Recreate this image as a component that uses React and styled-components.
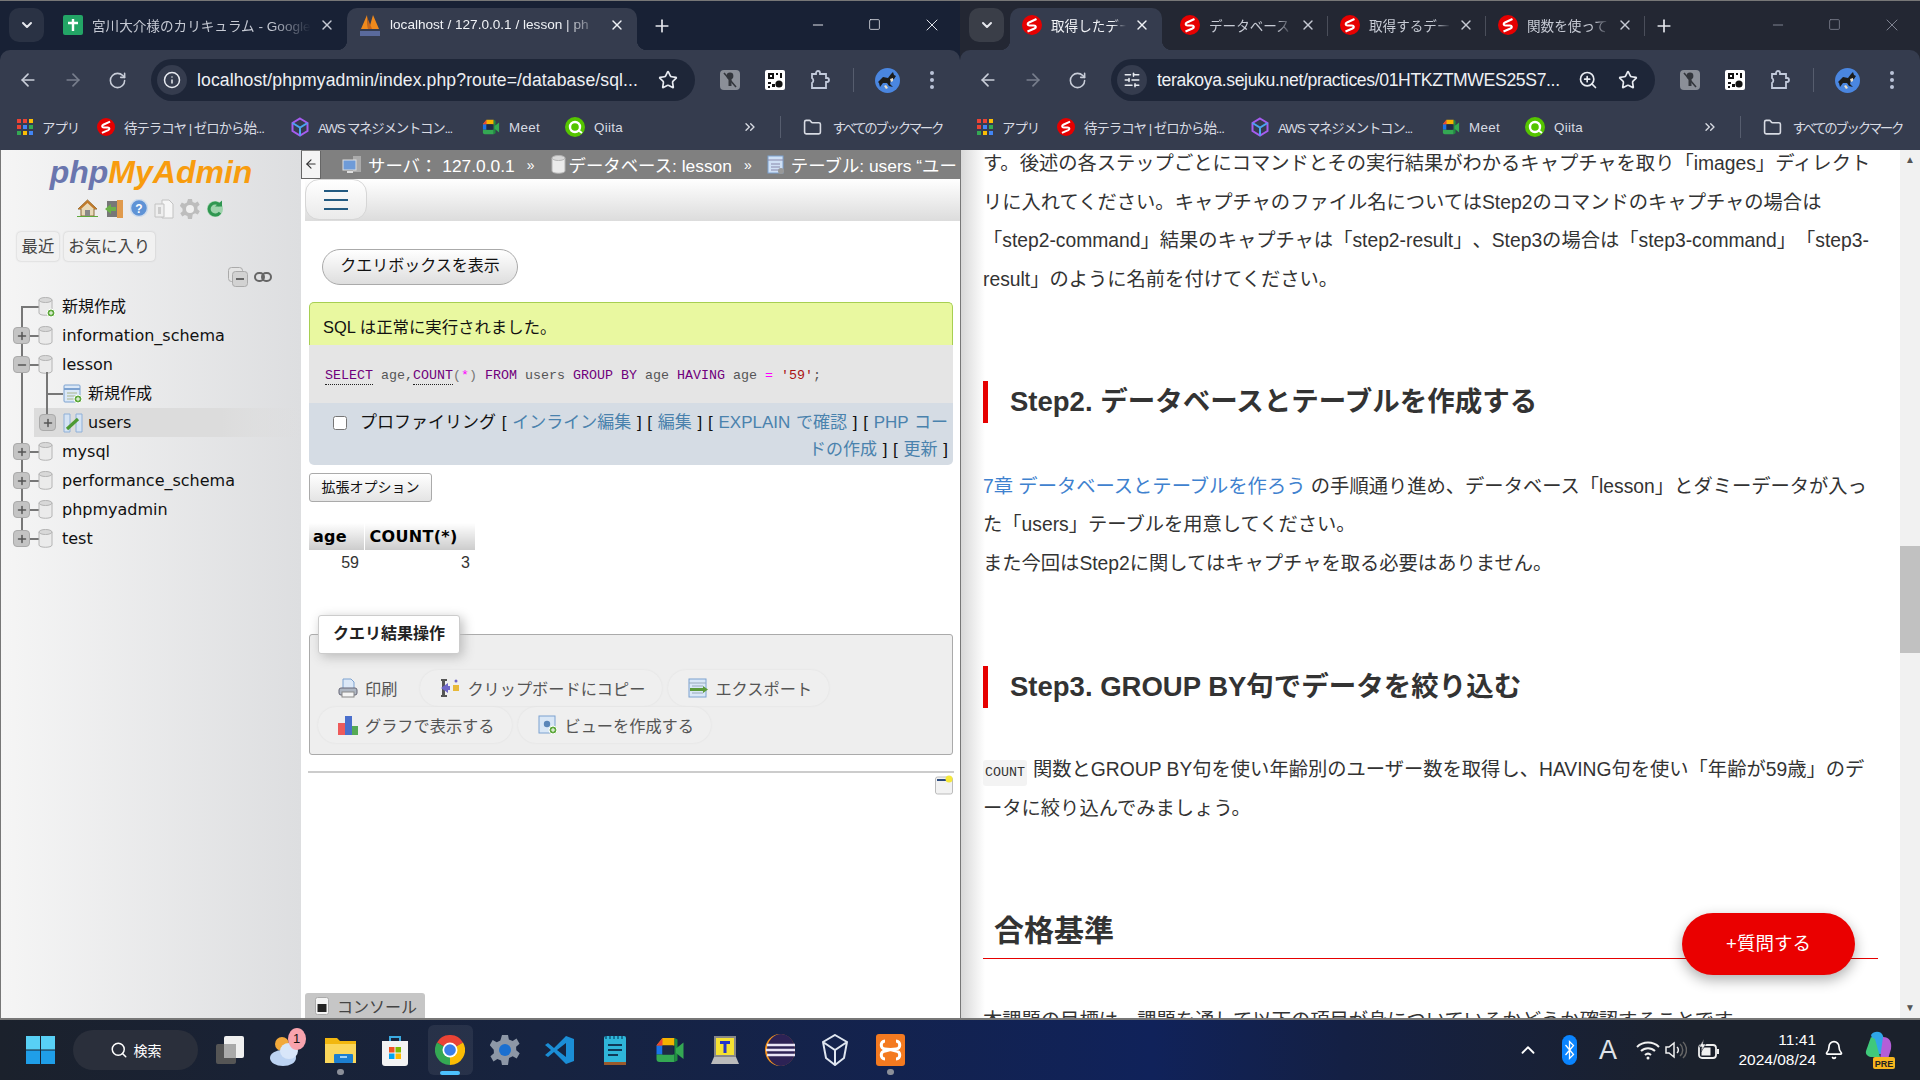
import React from 'react'
import styled, { createGlobalStyle } from 'styled-components'
import {
  ArrowLeft, ArrowRight, RotateCw, Info, Star, ZoomIn, Plus, X, ChevronDown, Minus, Square,
  ChevronsRight, Folder, SlidersHorizontal, Search, Bell, ChevronUp,
} from 'lucide-react'

const jp = `"Liberation Sans", "Noto Sans CJK JP", sans-serif`

const Global = createGlobalStyle`
  html, body { margin: 0; padding: 0; background: #1a212e; }
  body { width: 1920px; height: 1080px; overflow: hidden; font-family: ${jp}; }
  * { box-sizing: border-box; }
`

const Screen = styled.div`
  width: 1920px;
  height: 1080px;
  display: flex;
  flex-direction: column;
`
const Desktop = styled.div`
  display: flex;
  height: 1020px;
`
const Win = styled.section`
  width: 960px;
  height: 1020px;
  display: flex;
  flex-direction: column;
  background: ${p => p.$strip};
  border-top: 1px solid #777;
`

/* ---- tab strip ---- */
const Strip = styled.div`
  height: 49px;
  display: flex;
  align-items: flex-end;
  color: #e6e8ee;
  padding-left: 9px;
`
const TabMenu = styled.div`
  width: 35px;
  height: 34px;
  margin-bottom: 8px;
  border-radius: 10px;
  background: ${p => p.$bg};
  display: flex;
  align-items: center;
  justify-content: center;
  flex: none;
`
const Tab = styled.div`
  position: relative;
  width: ${p => p.$w}px;
  margin-left: ${p => p.$ml || 0}px;
  height: 42px;
  flex: none;
  display: flex;
  align-items: center;
  padding: 0 12px 9px 12px;
  border-radius: 10px 10px 0 0;
  background: ${p => (p.$active ? '#353c4e' : 'transparent')};
  color: ${p => (p.$active ? '#f0f2f6' : '#c6cad4')};
  font-size: 13.6px;
  &::after {
    content: '';
    display: ${p => (p.$sep ? 'block' : 'none')};
    position: absolute;
    right: 0;
    top: 8px;
    width: 1px;
    height: 20px;
    background: #4a4e5a;
  }
  &::before {
    content: '';
    display: ${p => (p.$active ? 'block' : 'none')};
    position: absolute;
    bottom: 0;
    left: -10px;
    right: -10px;
    height: 10px;
    z-index: 0;
    background:
      radial-gradient(circle at 0 0, transparent 10px, #353c4e 10.5px) left bottom / 10px 10px no-repeat,
      radial-gradient(circle at 100% 0, transparent 10px, #353c4e 10.5px) right bottom / 10px 10px no-repeat;
  }
`
const TabTitle = styled.span`
  flex: 1;
  margin-left: 9px;
  white-space: nowrap;
  overflow: hidden;
  -webkit-mask-image: linear-gradient(90deg, #000 82%, transparent);
  mask-image: linear-gradient(90deg, #000 82%, transparent);
`
const TabClose = styled(X)`
  flex: none;
  margin-left: 8px;
`
const NewTab = styled(Plus)`
  flex: none;
  margin: 0 0 14px ${p => p.$ml}px;
  color: #e6e8ee;
`
const WinControls = styled.div`
  margin-left: auto;
  display: flex;
  align-self: stretch;
  color: ${p => (p.$dim ? '#7f8391' : '#dfe2e8')};
`
const WinBtn = styled.div`
  width: 57px;
  display: flex;
  align-items: center;
  justify-content: center;
  padding-bottom: 2px;
`

/* ---- address bar ---- */
const Toolbar = styled.div`
  height: 60px;
  flex: none;
  background: #353c4e;
  border-radius: 10px 10px 0 0;
  display: flex;
  align-items: center;
  padding-left: 18px;
  color: #c9ced9;
`
const NavBtn = styled.div`
  width: 45px;
  flex: none;
  display: flex;
  justify-content: flex-start;
  opacity: ${p => (p.$off ? 0.45 : 1)};
`
const AddressBar = styled.div`
  width: 544px;
  height: 42px;
  margin-left: -2px;
  flex: none;
  border-radius: 21px;
  background: #1e2638;
  display: flex;
  align-items: center;
  padding: 0 17px 0 6px;
  color: #e8ebf1;
`
const SiteChip = styled.div`
  width: 30px;
  height: 30px;
  flex: none;
  border-radius: 50%;
  background: #353c4e;
  display: flex;
  align-items: center;
  justify-content: center;
  margin-right: 10px;
`
const Url = styled.div`
  flex: 1;
  font-size: 17.6px;
  letter-spacing: ${p => p.$ls}px;
  white-space: nowrap;
  overflow: hidden;
  color: #eef0f4;
`
const UrlIcons = styled.div`
  display: flex;
  align-items: center;
  gap: 20px;
`
const ExtGroup = styled.div`
  display: flex;
  align-items: center;
  margin-left: 25px;
  gap: 25px;
`
const ToolSep = styled.div`
  width: 1px;
  height: 24px;
  background: #565d6e;
  margin: 0 21px 0 23px;
`
const Kebab = styled.div`
  margin-left: 30px;
  display: flex;
  flex-direction: column;
  gap: 3px;
  i { width: 4px; height: 4px; border-radius: 50%; background: #b9c2d6; }
`

/* ---- bookmarks ---- */
const Bookmarks = styled.div`
  height: 40px;
  flex: none;
  background: #353c4e;
  display: flex;
  align-items: center;
  padding: 0 18px 6px 17px;
  color: #d8dbe3;
  font-size: 13.4px;
`
const Mark = styled.div`
  width: ${p => p.$w}px;
  flex: none;
  display: flex;
  align-items: center;
  gap: 9px;
  letter-spacing: ${p => p.$ls}px;
  white-space: nowrap;
  overflow: hidden;
`
const MarkTail = styled.div`
  margin-left: auto;
  display: flex;
  align-items: center;
  gap: 22px;
`
const TailSep = styled.div`
  width: 1px;
  height: 22px;
  background: #565d6e;
`
const AllMarks = styled.div`
  display: flex;
  align-items: center;
  gap: 11px;
  letter-spacing: -2.3px;
`

/* ---- page area ---- */
const Viewport = styled.div`
  flex: 1;
  min-height: 0;
  display: flex;
  overflow: hidden;
  background: #fff;
  border-left: 1px solid #777;
  border-bottom: 2px solid #777;
`
const Sidebar = styled.aside`
  width: 300px;
  flex: none;
  background: linear-gradient(90deg, #f5f5f5, #dddee0);
  padding-top: 3px;
`
const Logo = styled.div`
  text-align: center;
  font: italic bold 32px/38px "Liberation Sans", sans-serif;
  color: #f89c0e;
  span { color: #6a76ae; }
`
const NavIcons = styled.div`
  display: flex;
  justify-content: center;
  gap: 6px;
  margin: 8px 0 0 -1px;
  height: 22px;
`
const SideTabs = styled.div`
  display: flex;
  gap: 5px;
  margin: 11px 0 0 16px;
`
const SideTab = styled.div`
  height: 29px;
  padding: 0 4.5px;
  border-radius: 4px;
  background: #f1f1f1;
  box-shadow: 0 0 2px #bbb;
  font-size: 16.4px;
  line-height: 28px;
  color: #444;
`
const TreeTools = styled.div`
  height: 19px;
  margin: 6px 0 0 0;
  padding-left: 227px;
  display: flex;
  align-items: center;
  gap: 6px;
`
const Tree = styled.ul`
  list-style: none;
  margin: 6px 0 0 0;
  padding: 0;
`
const TreeRow = styled.li`
  position: relative;
  height: 29px;
  display: flex;
  align-items: center;
  padding-left: ${p => p.$left}px;
  font: 16px/29px "DejaVu Sans", "Noto Sans CJK JP", sans-serif;
  color: #111;
  background: ${p => (p.$hot ? 'linear-gradient(90deg, #dcdcdc 70%, transparent)' : 'none')};
  margin-left: ${p => (p.$hot ? 33 : 0)}px;
`
const TreeLine = styled.i`
  position: absolute;
  left: ${p => p.$x}px;
  top: ${p => p.$top}px;
  bottom: ${p => p.$bottom}px;
  width: 1.5px;
  background: #777;
`
const TreeStub = styled.i`
  position: absolute;
  left: ${p => p.$x}px;
  top: 14px;
  width: ${p => p.$w}px;
  height: 1.5px;
  background: #777;
`
const TreeIcon = styled.span`
  position: relative;
  flex: none;
  display: flex;
  margin-right: ${p => p.$gap}px;
`
const Expander = styled.span`
  position: relative;
  width: 17px;
  height: 17px;
  flex: none;
  margin-right: 7px;
  border-radius: 4px;
  background: #c4c4c4;
  border: 1px solid #aaa;
  color: #555;
  display: flex;
  align-items: center;
  justify-content: center;
`

const Main = styled.main`
  flex: 1;
  min-width: 0;
  display: flex;
  flex-direction: column;
  background: #fff;
`
const Crumbs = styled.div`
  height: 29px;
  flex: none;
  background: #808080;
  display: flex;
  align-items: center;
  color: #fff;
  font-size: 17.4px;
  white-space: nowrap;
  overflow: hidden;
`
const BackBox = styled.div`
  width: 20px;
  height: 28px;
  flex: none;
  background: #f4f4f4;
  border: 1px solid #666;
  border-top: none;
  color: #333;
  display: flex;
  align-items: center;
  justify-content: center;
  margin-right: 21px;
`
const Crumb = styled.span`
  display: inline-flex;
  align-items: center;
  gap: ${p => p.$gap}px;
  margin-right: 12px;
`
const CrumbArrow = styled.span`
  margin-right: 15px;
  font-size: 14px;
`
const MenuBar = styled.div`
  height: 42px;
  flex: none;
  margin-left: 4px;
  background: linear-gradient(#fff, #dcdcdc);
`
const Burger = styled.div`
  width: 62px;
  height: 41px;
  border: 1px solid #d6d6d6;
  border-radius: 14px;
  background: linear-gradient(#fff, #eaeaea);
  display: flex;
  flex-direction: column;
  justify-content: center;
  gap: 7px;
  padding: 0 18px;
  span { height: 2px; background: #235a81; }
`
const Body = styled.div`
  padding: 0 7px 0 8px;
`
const QueryBtn = styled.div`
  width: 196px;
  height: 36px;
  margin: 28px 0 0 13px;
  border-radius: 18px;
  border: 1px solid #aaa;
  background: linear-gradient(#fff, #dedede);
  font-size: 16px;
  line-height: 31px;
  text-align: center;
  color: #111;
`
const Success = styled.div`
  margin-top: 17px;
  height: 43px;
  background: #e9f8a0;
  border: 1px solid #a7cf52;
  border-bottom: none;
  border-radius: 5px 5px 0 0;
  padding-left: 13px;
  font-size: 16.4px;
  line-height: 49px;
  color: #111;
`
const SqlBox = styled.div`
  height: 58px;
  background: #e5e5e5;
  padding-left: 16px;
  font: 13.33px/62px "Liberation Mono", monospace;
  color: #555;
  white-space: pre;
`
const Kw = styled.span`
  color: ${p => p.$c || '#70007c'};
  border-bottom: ${p => (p.$dotted ? '1px dotted #222' : 'none')};
  padding-bottom: ${p => (p.$dotted ? 1 : 0)}px;
`
const ActionBar = styled.div`
  position: relative;
  height: 62px;
  background: #d5dce4;
  border-radius: 0 0 5px 5px;
  padding: 6px 5px 0 0;
  text-align: right;
  font-size: 17px;
  word-spacing: 1px;
  line-height: 27px;
  white-space: nowrap;
  color: #111;
  a { color: #4a82ad; text-decoration: none; }
`
const Check = styled.input`
  width: 14px;
  height: 14px;
  margin: 0 13px 0 0;
  vertical-align: -2px;
`
const OptionBtn = styled.div`
  width: 123px;
  height: 29px;
  margin-top: 8px;
  border: 1px solid #aaa;
  border-radius: 3px;
  background: linear-gradient(#fff, #e4e4e4);
  font-size: 14px;
  line-height: 26px;
  text-align: center;
  color: #111;
`
const ResultTable = styled.table`
  margin-top: 21px;
  border-collapse: collapse;
  table-layout: fixed;
  width: 166px;
  font: 16px "DejaVu Sans", sans-serif;
  color: #333;
  th {
    height: 27px;
    padding: 0 4px;
    background: linear-gradient(#fff, #ccc);
    color: #000;
    text-align: left;
    border-right: 1px solid #fff;
    font-weight: bold;
    letter-spacing: 0.3px;
    white-space: nowrap;
  }
  th:first-child { width: 55px; }
  th:last-child { padding-left: 5px; border-right: none; }
  td {
    height: 25px;
    padding: 0 5px;
    text-align: right;
    font-family: ${jp};
  }
`
const Fieldset = styled.div`
  position: relative;
  margin-top: 59px;
  height: 121px;
  background: #eee;
  border: 1px solid #aaa;
  border-radius: 3px;
  padding: 35px 8px 0;
  display: flex;
  flex-wrap: wrap;
  align-content: flex-start;
  gap: 1px 6px;
`
const Legend = styled.div`
  position: absolute;
  left: 8px;
  top: -20px;
  width: 142px;
  height: 39px;
  background: #fff;
  border: 1px solid #ccc;
  border-radius: 3px;
  box-shadow: 3px 3px 12px #bbb;
  font-weight: bold;
  font-size: 16px;
  line-height: 36px;
  text-align: center;
  color: #222;
`
const OpBtn = styled.div`
  height: 36px;
  padding: 0 17px 0 20px;
  border-radius: 18px;
  background: ${p => (p.$bare ? 'transparent' : '#efefef')};
  box-shadow: ${p => (p.$bare ? 'none' : '0 0 2px #ddd')};
  display: flex;
  align-items: center;
  gap: 7px;
  font-size: 16.2px;
  color: #555;
`
const Rule = styled.div`
  height: 2px;
  margin: 16px -1px 0 -1px;
  background: #ccc;
`
const NoteIcon = styled.div`
  display: flex;
  justify-content: flex-end;
  margin-top: 2px;
`
const ConsoleTab = styled.div`
  margin-top: auto;
  margin-left: 4px;
  width: 120px;
  height: 25px;
  flex: none;
  background: #c6c6c6;
  border-radius: 3px 3px 0 0;
  display: flex;
  align-items: center;
  gap: 8px;
  padding-left: 10px;
  font-size: 16px;
  color: #444;
`

/* ---- right page ---- */
const Article = styled.article`
  flex: 1;
  min-width: 0;
  overflow: hidden;
  background: linear-gradient(90deg, #d8d8d8, #fff 24px);
  padding: 0 0 0 22px;
  margin-top: -5px;
  color: #333;
  font-size: 19.3px;
  line-height: 38.5px;
  text-spacing-trim: space-all;
`
const Para = styled.p`
  margin: ${p => p.$mt || 0}px 0 0 0;
  white-space: nowrap;
  a { color: #3f82cf; text-decoration: none; }
`
const StepHead = styled.h3`
  margin: ${p => p.$mt}px 0 0 0;
  height: 42px;
  border-left: 5px solid #e60000;
  padding-left: 22px;
  font-size: 27.5px;
  line-height: 42px;
  font-weight: bold;
`
const Code = styled.code`
  display: inline-block;
  background: #f3f3f3;
  border-radius: 3px;
  padding: 0 2px;
  font: 13.33px/26px "Liberation Mono", monospace;
  margin-right: 6px;
`
const PassHead = styled.h2`
  margin: 72.5px 22px 0 0;
  height: 58px;
  border-bottom: 1.5px solid #e60000;
  padding-left: 11px;
  font-size: 30px;
  line-height: 60px;
  font-weight: bold;
`
const AskBtn = styled.div`
  position: absolute;
  right: 65px;
  bottom: 43px;
  width: 173px;
  height: 62px;
  border-radius: 31px;
  background: #ea0000;
  box-shadow: 0 5px 14px rgba(0, 0, 0, 0.32);
  color: #fff;
  font-size: 18.5px;
  text-align: center;
  line-height: 62px;
`
const Scrollbar = styled.div`
  width: 20px;
  flex: none;
  background: #f1f1f1;
  display: flex;
  flex-direction: column;
  align-items: center;
  font-size: 10px;
  line-height: 20px;
  color: #555;
`
const Thumb = styled.div`
  width: 100%;
  height: 107px;
  margin-top: 376px;
  background: #c1c1c1;
`
const ScrollEnd = styled.div`
  margin-top: auto;
`
const RightView = styled(Viewport)`
  position: relative;
`

/* ---- taskbar ---- */
const Taskbar = styled.footer`
  height: 60px;
  flex: none;
  display: flex;
  align-items: center;
  background: linear-gradient(90deg, #1b212c 0%, #17233f 28%, #10225a 60%, #142044 70%, #1b212c 88%);
  color: #fff;
  padding-left: 13px;
`
const TaskIcon = styled.div`
  position: relative;
  width: 55px;
  height: 60px;
  flex: none;
  display: flex;
  align-items: center;
  justify-content: center;
  &::before {
    content: '';
    display: ${p => (p.$active ? 'block' : 'none')};
    position: absolute;
    inset: 5px 5px 5px 5px;
    border-radius: 6px;
    background: rgba(255, 255, 255, 0.07);
  }
  &::after {
    content: '';
    display: ${p => (p.$dot ? 'block' : 'none')};
    position: absolute;
    bottom: 5px;
    width: ${p => (p.$active ? 20 : 7)}px;
    height: ${p => (p.$active ? 4 : 6)}px;
    border-radius: 3px;
    background: ${p => (p.$active ? '#4cc2ff' : '#8b8f99')};
  }
  svg { position: relative; }
`
const Badge = styled.span`
  position: absolute;
  right: 7px;
  top: 8px;
  width: 18px;
  height: 22px;
  border-radius: 50%;
  background: #f8a3ad;
  color: #111;
  font-size: 13px;
  line-height: 22px;
  text-align: center;
`
const SearchPill = styled.div`
  width: 125px;
  height: 40px;
  flex: none;
  margin: 0 4.5px 0 5px;
  border-radius: 20px;
  background: #2a2f3b;
  display: flex;
  align-items: center;
  justify-content: center;
  gap: 6px;
  font-size: 14px;
`
const Tray = styled.div`
  margin-left: auto;
  padding-right: 12px;
  display: flex;
  align-items: center;
  height: 100%;
`
const TrayItem = styled.div`
  width: ${p => p.$w}px;
  flex: none;
  display: flex;
  justify-content: center;
  align-items: center;
`
const TrayA = styled.span`
  font-size: 27px;
  color: #dfe2e8;
  font-family: "Liberation Sans", sans-serif;
`
const Clock = styled.div`
  width: 80px;
  margin-left: 12px;
  flex: none;
  text-align: right;
  font-size: 15.5px;
  line-height: 20px;
  white-space: nowrap;
`

/* ---- icons ---- */
const Samurai = ({ s = 20 }) => (
  <svg width={s} height={s} viewBox="0 0 20 20">
    <circle cx="10" cy="10" r="10" fill="#e60000" />
    <path d="M14.500 4 7 7.500c-2 1-1.500 3 .5 3h4.500c2 0 2.500 2 .5 3L5.500 16.500" fill="none" stroke="#fff" strokeWidth="2.200" />
  </svg>
)
const SheetIcon = () => (
  <svg width="20" height="20" viewBox="0 0 20 20">
    <rect width="20" height="20" rx="2" fill="#23a566" />
    <path d="M10 4v12M5 8h10" stroke="#fff" strokeWidth="2.4" />
  </svg>
)
const PmaIcon = () => (
  <svg width="22" height="24" viewBox="0 0 22 24">
    <path d="M2 16 8 2l1 14zM10 16l4-14 6 14z" fill="#f08a1c" />
    <path d="M8 4 13 16H9z" fill="#c9661a" />
    <path d="M1 18h20v5H1z" fill="#5a6a9c" />
  </svg>
)
const AppsIcon = () => (
  <svg width="16" height="16" viewBox="0 0 16 16">
    {[['#ea4335', '#ea4335', '#fbbc04'], ['#ea4335', '#4285f4', '#34a853'], ['#34a853', '#fbbc04', '#4285f4']].map((r, y) =>
      r.map((c, x) => <rect key={x} x={x * 6} y={y * 6} width="4" height="4" fill={c} />)
    )}
  </svg>
)
const AwsCube = () => (
  <svg width="18" height="20" viewBox="0 0 18 20" fill="none" strokeWidth="2">
    <path d="M9 1.5 16.5 6v8L9 18.5 1.5 14V6z" stroke="#a65cf0" />
    <path d="M1.5 6 9 10.5 16.5 6M9 10.5v8" stroke="#4aa3f0" />
  </svg>
)
const MeetIcon = ({ s = 20 }) => (
  <svg width={s} height={s} viewBox="0 0 20 20">
    <path d="M5 2h8v5H1z" fill="#f4b400" />
    <path d="M1 7h4v6H1z" fill="#1a73e8" />
    <path d="M1 13h12v5H3a2 2 0 0 1-2-2z" fill="#34a853" />
    <path d="M5 2 1 7h4z" fill="#ea4335" />
    <path d="M13 2v16l2-1V3z" fill="#1e8e3e" />
    <path d="m14 9 5-4v11l-5-4z" fill="#34a853" />
    <rect x="5" y="7" width="7" height="6" fill="#1f2a44" />
  </svg>
)
const QiitaIcon = () => (
  <svg width="20" height="20" viewBox="0 0 20 20">
    <circle cx="10" cy="10" r="10" fill="#55c500" />
    <circle cx="10" cy="10" r="5" fill="none" stroke="#fff" strokeWidth="2.4" />
    <path d="M13 13l4 3" stroke="#fff" strokeWidth="2" />
  </svg>
)
const KeyExt = () => (
  <svg width="20" height="20" viewBox="0 0 20 20">
    <rect width="20" height="20" rx="4" fill="#8b8f98" />
    <circle cx="10" cy="6" r="3.400" fill="#33363d" />
    <path d="M10 8v8" stroke="#33363d" strokeWidth="3" />
    <path d="m4 3 12 14" stroke="#33363d" strokeWidth="1.600" />
  </svg>
)
const QrExt = () => (
  <svg width="20" height="20" viewBox="0 0 20 20">
    <rect width="20" height="20" rx="2" fill="#fff" />
    <path d="M3 3h6v6H3z" fill="#111" />
    <path d="M5 5h2v2H5z" fill="#fff" />
    <path d="M11 3h2v2h-2zM15 3h2v5h-2zM3 12h3v2H3zM7 14h3v3H7zM3 16h2v2H3z" fill="#111" />
    <circle cx="14" cy="14" r="3.600" fill="#111" />
  </svg>
)
const PuzzleExt = () => (
  <svg width="20" height="20" viewBox="0 0 20 20" fill="none" stroke="#c2cadb" strokeWidth="1.800">
    <path d="M2 4h4V3a2 2 0 0 1 4 0v1h6v4h1a2 2 0 0 1 0 4h-1v6H2v-5a3 3 0 0 0 0-5z" />
  </svg>
)
const Avatar = () => (
  <svg width="25" height="25" viewBox="0 0 25 25">
    <circle cx="12.500" cy="12.500" r="12.500" fill="#4a86e0" />
    <path d="M3 14 8 9l5 1 3-4 2-2 1 3 2 1-2 3-3 1-1 4 3 3-4-1-2-3-4 0-3 4-1-4z" fill="#1c1c1c" />
    <path d="m15 11 3-1 0 3-2 1zM9 18l2 3 2-1-2-3z" fill="#e8ddc8" />
  </svg>
)
const DbIcon = ({ add }) => (
  <svg width="19" height="22" viewBox="0 0 19 22">
    <path d="M2 4v13c0 3 13 3 13 0V4z" fill="#ebebeb" stroke="#b4b4b4" />
    <ellipse cx="8.5" cy="4" rx="6.5" ry="2.5" fill="#d8d8d8" stroke="#b4b4b4" />
    {add && <circle cx="14" cy="17" r="4" fill="#5ea83c" stroke="#fff" />}
    {add && <path d="M12 17h4M14 15v4" stroke="#fff" />}
  </svg>
)
const TableAdd = () => (
  <svg width="20" height="20" viewBox="0 0 20 20">
    <rect x="1" y="1" width="16" height="17" rx="1" fill="#dbe8f7" stroke="#7da2d0" />
    <path d="M1 5h16" stroke="#7da2d0" strokeWidth="2" />
    <path d="M4 9h10M4 12h10M4 15h10" stroke="#a9b58c" />
    <circle cx="15" cy="15" r="4" fill="#5ea83c" stroke="#fff" />
    <path d="M13 15h4M15 13v4" stroke="#fff" />
  </svg>
)
const TableLink = () => (
  <svg width="20" height="20" viewBox="0 0 20 20">
    <path d="M1 1h6v18H1zM13 1h6v18h-6z" fill="#d5e3f3" stroke="#8fb0d8" />
    <path d="M4 16 15 6" stroke="#4c9a34" strokeWidth="3.2" />
  </svg>
)
const Home = () => (
  <svg width="21" height="18" viewBox="0 0 21 18">
    <path d="M10.5 1 1 10h3v7h13v-7h3z" fill="#e8d9b8" stroke="#8a6a3a" />
    <path d="M10.5 1 1 10h3l6.5-6 6.5 6h3z" fill="#c07a2a" />
    <path d="M8 11h5v6H8z" fill="#888" />
    <path d="M0 17h21v1H0z" fill="#5ea83c" />
  </svg>
)
const Exit = () => (
  <svg width="20" height="20" viewBox="0 0 20 20">
    <rect x="3" y="2" width="11" height="16" fill="#777" />
    <path d="M13 1h6v18h-6z" fill="#e09a4c" />
    <path d="M1 10 7 5v3h5v4H7v3z" fill="#6cb04a" />
  </svg>
)
const Help = () => (
  <svg width="18" height="18" viewBox="0 0 18 18">
    <circle cx="9" cy="9" r="8.5" fill="#5f93d6" stroke="#cfdcec" strokeWidth="1.5" />
    <text x="9" y="13.5" fontSize="12" fontWeight="bold" textAnchor="middle" fill="#fff" fontFamily="Liberation Sans">?</text>
  </svg>
)
const Docs = () => (
  <svg width="20" height="20" viewBox="0 0 20 20">
    <path d="M8 1h7l4 4v14H8z" fill="#f6f6f6" stroke="#c2c2c2" />
    <path d="M1 5h9v13H1z" fill="#eee" stroke="#c2c2c2" />
    <path d="M4 8h3v7H4z" fill="#ccc" />
  </svg>
)
const Gear = ({ s = 20, c = '#bdbdbd', h = '#f0f0f0' }) => (
  <svg width={s} height={s} viewBox="0 0 20 20">
    <path d="M8 0h4l.6 3 2.5 1 2.6-1.6 2 3.4-2.3 2 .1 2.4 2.3 2-2 3.4-2.7-1.4-2.4 1.2L12 20H8l-.6-3-2.5-1-2.6 1.6-2-3.4 2.3-2-.1-2.4L-.2 6.8l2-3.4 2.7 1.4 2.4-1.2z" fill={c} />
    <circle cx="10" cy="10" r="4" fill={h} />
  </svg>
)
const Reload = () => (
  <svg width="18" height="20" viewBox="0 0 18 20" fill="none">
    <circle cx="9" cy="10" r="8" fill="#9ed3ac" />
    <path d="M14 6.500A6 6 0 1 0 14 13.500" stroke="#2f9650" strokeWidth="3" />
    <path d="M9 7.500h7V1.500z" fill="#2f9650" />
  </svg>
)
const Collapse = () => (
  <svg width="20" height="20" viewBox="0 0 20 20">
    <rect x="0.5" y="0.5" width="14" height="14" rx="3" fill="#e4e4e4" stroke="#aaa" />
    <rect x="4.5" y="4.5" width="15" height="15" rx="3" fill="#d2d2d2" stroke="#aaa" />
    <path d="M8 12h8" stroke="#666" strokeWidth="2" />
  </svg>
)
const LinkIcon = () => (
  <svg width="18" height="10" viewBox="0 0 18 10" fill="none" stroke="#666" strokeWidth="2">
    <rect x="1" y="1" width="9" height="8" rx="4" />
    <rect x="8" y="1" width="9" height="8" rx="4" />
  </svg>
)
const ServerIcon = () => (
  <svg width="20" height="20" viewBox="0 0 20 20">
    <rect x="11" y="1" width="8" height="16" fill="#aaa" />
    <rect x="1" y="5" width="13" height="10" fill="#6e9bd8" stroke="#ddd" />
    <path d="M5 16h6v2H5z" fill="#ddd" />
  </svg>
)
const CalcIcon = () => (
  <svg width="18" height="20" viewBox="0 0 18 20">
    <rect x="1" y="1" width="15" height="17" fill="#cfe0f5" stroke="#7da2d0" />
    <path d="M1 5h15M4 9h9M4 12h9M4 15h9" stroke="#88a" />
    <circle cx="14" cy="16" r="3" fill="#999" />
  </svg>
)
const Printer = () => (
  <svg width="20" height="20" viewBox="0 0 20 20">
    <path d="M5 1h8l3 3v7H5z" fill="#dce8f7" stroke="#7da2d0" />
    <rect x="1" y="10" width="18" height="7" rx="2" fill="#aeb6c2" stroke="#667" />
    <rect x="4" y="14" width="12" height="5" fill="#f4f4f4" stroke="#888" />
  </svg>
)
const CopyIcon = () => (
  <svg width="20" height="20" viewBox="0 0 20 20">
    <path d="M1 1h6v2H1zM1 17h6v2H1zM2 3h3v14H2z" fill="#555" />
    <path d="M1 10 8 5v3h2v4H8v3z" fill="#6f68c8" />
    <rect x="13" y="7" width="6" height="6" fill="#e8b93a" />
    <circle cx="16" cy="3" r="1.5" fill="#6f68c8" />
  </svg>
)
const ExportIcon = () => (
  <svg width="20" height="20" viewBox="0 0 20 20">
    <rect x="1" y="1" width="17" height="18" fill="#d9e7f6" stroke="#7da2d0" />
    <path d="M1 5h17M4 8h11M4 15h11" stroke="#9ab" />
    <path d="M2 10h13V8l5 3.5-5 3.5v-2H2z" fill="#5c9a3a" />
  </svg>
)
const ChartIcon = () => (
  <svg width="20" height="20" viewBox="0 0 20 20">
    <rect y="8" width="7" height="12" fill="#ee5a5a" />
    <rect x="7" y="1" width="7" height="19" fill="#4a6fcc" />
    <rect x="14" y="11" width="6" height="9" fill="#55aa55" />
  </svg>
)
const ViewIcon = () => (
  <svg width="20" height="20" viewBox="0 0 20 20">
    <rect x="1" y="1" width="16" height="17" fill="#d9e7f6" stroke="#7da2d0" />
    <circle cx="9" cy="9" r="3.2" fill="#5a86b8" />
    <circle cx="15" cy="15" r="4" fill="#5ea83c" stroke="#fff" />
    <path d="M13 15h4M15 13v4" stroke="#fff" />
  </svg>
)
const NotePage = () => (
  <svg width="18" height="20" viewBox="0 0 18 20">
    <rect x="0.5" y="2" width="17" height="17" rx="2" fill="#f2f2f2" stroke="#bbb" />
    <path d="M2 5h10" stroke="#2b4a7c" strokeWidth="2" />
    <circle cx="14" cy="4" r="3.5" fill="#f5e83a" />
  </svg>
)
const ConsoleGlyph = () => (
  <svg width="14" height="18" viewBox="0 0 14 18">
    <rect x="0.5" y="0.5" width="13" height="17" rx="2" fill="#f4f4f4" stroke="#aaa" />
    <rect x="2.5" y="7" width="9" height="8" fill="#222" />
  </svg>
)

const WinLogo = () => (
  <svg width="29" height="30" viewBox="0 0 29 30">
    <path d="M0 1h14v13.500H0zM15 1h14v13.500H15z" fill="#58d0f5" />
    <path d="M0 15.500h14V29H0zM15 15.500h14V29H15z" fill="#1f9ee8" />
  </svg>
)
const TaskView = () => (
  <svg width="30" height="30" viewBox="0 0 30 30">
    <rect x="9" y="1" width="20" height="22" rx="2" fill="#f0f0f0" />
    <rect x="1" y="9" width="20" height="20" rx="2" fill="#555" />
    <rect x="9" y="9" width="12" height="14" fill="#aaa" />
  </svg>
)
const Weather = () => (
  <svg width="32" height="34" viewBox="0 0 32 34">
    <circle cx="13" cy="11" r="7" fill="#f2a93b" />
    <ellipse cx="14" cy="25" rx="13" ry="8" fill="#bcd3f2" />
    <ellipse cx="20" cy="18" rx="9" ry="8" fill="#d8e6f9" />
  </svg>
)
const Explorer = () => (
  <svg width="31" height="28" viewBox="0 0 31 28">
    <path d="M0 2h12l3 3h16v22H0z" fill="#f2b70f" />
    <path d="M0 8h31v19H0z" fill="#fbd75b" />
    <rect x="9" y="18" width="19" height="9" rx="1" fill="#1c7fd1" />
    <rect x="15" y="20" width="7" height="2" fill="#9fd3f7" />
  </svg>
)
const Store = () => (
  <svg width="28" height="32" viewBox="0 0 28 32">
    <path d="M9 7V3h10v4" fill="none" stroke="#3aa9e0" strokeWidth="2" />
    <path d="M1 7h26v22a3 3 0 0 1-3 3H4a3 3 0 0 1-3-3z" fill="#f3f3f3" />
    <rect x="8" y="13" width="5.500" height="5.500" fill="#f25022" />
    <rect x="14.500" y="13" width="5.500" height="5.500" fill="#7fba00" />
    <rect x="8" y="19.500" width="5.500" height="5.500" fill="#00a4ef" />
    <rect x="14.500" y="19.500" width="5.500" height="5.500" fill="#ffb900" />
  </svg>
)
const Chrome = () => (
  <svg width="30" height="30" viewBox="0 0 30 30">
    <path d="M15 15 2 7.500A15 15 0 0 1 28 7.500z" fill="#ea4335" />
    <path d="M15 15 2 7.500A15 15 0 0 0 15 30z" fill="#34a853" />
    <path d="M15 15 28 7.500A15 15 0 0 1 15 30z" fill="#fbbc04" />
    <circle cx="15" cy="15" r="7.500" fill="#fff" />
    <circle cx="15" cy="15" r="5.800" fill="#3a7ee8" />
  </svg>
)
const VsCode = () => (
  <svg width="30" height="30" viewBox="0 0 30 30">
    <path d="M21 1 9 13 3 8 0 10l6 5-6 5 3 2 6-5 12 12 8-3V4z" fill="#1b8ed6" />
    <path d="M21 8v14l-9-7z" fill="#16243f" />
  </svg>
)
const Notepad = () => (
  <svg width="24" height="30" viewBox="0 0 24 30">
    <rect x="1" y="1" width="22" height="28" rx="2" fill="#2fb6d9" />
    <path d="M1 27h22v3H1z" fill="#9a5a2c" />
    <path d="M5 10h14M5 15h14M5 20h10" stroke="#103a58" strokeWidth="2" />
    <path d="M3 1v3M7 1v3M11 1v3M15 1v3M19 1v3" stroke="#0d5c80" strokeWidth="1.500" />
  </svg>
)
const TBook = () => (
  <svg width="30" height="30" viewBox="0 0 30 30">
    <path d="M4 1h22v21H4z" fill="#888" />
    <path d="M6 3h18v17H6z" fill="#f5e132" />
    <path d="M10 6h10v3h-3.500v9h-3V9H10z" fill="#2233cc" />
    <path d="M4 22h22l3 7H1z" fill="#bbb" />
  </svg>
)
const Eclipse = () => (
  <svg width="30" height="32" viewBox="0 0 30 32">
    <ellipse cx="15" cy="16" rx="15" ry="16" fill="#f7941e" />
    <ellipse cx="16" cy="16" rx="14" ry="16" fill="#2c2255" />
    <path d="M2 11h28M1 16h29M2 21h28" stroke="#e8e4f5" strokeWidth="2.500" />
  </svg>
)
const VBox = () => (
  <svg width="26" height="32" viewBox="0 0 26 32" fill="none" stroke="#dfe6f0" strokeWidth="2">
    <path d="M13 1 25 8 22 24l-9 7-9-7L1 8zM1 8l12 8 12-8M13 16v15" />
  </svg>
)
const Xampp = () => (
  <svg width="29" height="32" viewBox="0 0 29 32">
    <rect width="29" height="32" rx="3" fill="#f47a20" />
    <path d="M9 7c-5 0-5 8 0 8 5 0 11 2 11 2 5 0 5 8 0 8M20 7c5 0 5 8 0 8-5 0-11 2-11 2-5 0-5 8 0 8" fill="none" stroke="#fff" strokeWidth="3" />
  </svg>
)
const Copilot = () => (
  <svg width="30" height="38" viewBox="0 0 30 38">
    <path d="M6 4c3-5 11-4 12 1l5 18H12z" fill="#2fa6e8" />
    <path d="M18 6c6 0 9 4 8 12l-3 10H15z" fill="#b45ed8" />
    <path d="M6 6 1 20c-1 4 3 6 6 6h8L10 8z" fill="#3fc97a" />
    <rect x="8" y="26" width="22" height="12" rx="2" fill="#f6b51e" />
    <text x="19" y="35.500" fontSize="9" fontWeight="bold" textAnchor="middle" fill="#222" fontFamily="Liberation Sans">PRE</text>
  </svg>
)
const BluetoothPill = () => (
  <svg width="15" height="30" viewBox="0 0 15 30">
    <rect width="15" height="30" rx="7.500" fill="#0a84ff" />
    <path d="m3.500 10 8 9.500-4 4V6.500l4 4-8 9.500" fill="none" stroke="#fff" strokeWidth="1.300" />
  </svg>
)
const TrayWifi = () => (
  <svg width="24" height="20" viewBox="0 0 24 20" fill="none" stroke="#f0f0f0" strokeWidth="2">
    <path d="M1 7a16 16 0 0 1 22 0M5 11a10 10 0 0 1 14 0M9 15a4.500 4.500 0 0 1 6 0" />
    <circle cx="12" cy="18" r="1.500" fill="#f0f0f0" stroke="none" />
  </svg>
)
const TraySpeaker = () => (
  <svg width="22" height="20" viewBox="0 0 22 20" fill="none" stroke="#f0f0f0" strokeWidth="1.500">
    <path d="M1 7v6h3l5 4V3L4 7z" />
    <path d="M12 7a4 4 0 0 1 0 6" />
    <path d="M15 4a8 8 0 0 1 0 12M18 2a11 11 0 0 1 0 16" stroke="#666" />
  </svg>
)
const TrayBattery = () => (
  <svg width="22" height="22" viewBox="0 0 22 22">
    <rect x="2" y="6" width="17" height="13" rx="3" fill="#1a1f2a" stroke="#f0f0f0" strokeWidth="1.800" />
    <rect x="4.500" y="8.500" width="9" height="8" fill="#f0f0f0" />
    <rect x="20" y="10" width="2" height="5" fill="#f0f0f0" />
    <path d="M7 0 2 8h3l-1 5 5-8H6z" fill="#f0f0f0" stroke="#1a1f2a" strokeWidth=".6" />
  </svg>
)

/* ---- chrome shared by both windows ---- */
const BookmarkBar = () => (
  <Bookmarks>
    <Mark $w={80} $ls={-1}><AppsIcon />アプリ</Mark>
    <Mark $w={194} $ls={-1}><Samurai s={18} />待テラコヤ | ゼロから始...</Mark>
    <Mark $w={191} $ls={-1.2}><AwsCube />AWS マネジメントコン...</Mark>
    <Mark $w={83} $ls={0.3}><MeetIcon s={18} />Meet</Mark>
    <Mark $w={70} $ls={0.3}><QiitaIcon />Qiita</Mark>
    <MarkTail>
      <ChevronsRight size={16} />
      <TailSep />
      <AllMarks><Folder size={19} />すべてのブックマーク</AllMarks>
    </MarkTail>
  </Bookmarks>
)

const Extensions = () => (
  <ExtGroup>
    <KeyExt />
    <QrExt />
    <PuzzleExt />
  </ExtGroup>
)

const NavButtons = () => (
  <>
    <NavBtn><ArrowLeft size={20} /></NavBtn>
    <NavBtn $off><ArrowRight size={20} /></NavBtn>
    <NavBtn><RotateCw size={19} /></NavBtn>
  </>
)

const Controls = ({ dim }) => (
  <WinControls $dim={dim}>
    <WinBtn><Minus size={16} strokeWidth={1.5} /></WinBtn>
    <WinBtn><Square size={13} strokeWidth={1.5} /></WinBtn>
    <WinBtn><X size={20} strokeWidth={1.2} /></WinBtn>
  </WinControls>
)

const databases = [
  { name: '新規作成', kind: 'new' },
  { name: 'information_schema' },
  { name: 'lesson', open: true },
  { name: '新規作成', kind: 'table-new' },
  { name: 'users', kind: 'table' },
  { name: 'mysql' },
  { name: 'performance_schema' },
  { name: 'phpmyadmin' },
  { name: 'test' },
]

const TreeItem = ({ item, index }) => {
  if (item.kind === 'new') {
    return (
      <TreeRow $left={36}>
        <TreeLine $x={20} $top={14} $bottom={0} />
        <TreeStub $x={20} $w={18} />
        <TreeIcon $gap={6}><DbIcon add /></TreeIcon>
        {item.name}
      </TreeRow>
    )
  }
  if (item.kind === 'table-new') {
    return (
      <TreeRow $left={62}>
        <TreeLine $x={20} $top={0} $bottom={0} />
        <TreeLine $x={45} $top={0} $bottom={0} />
        <TreeStub $x={45} $w={17} />
        <TreeIcon $gap={5}><TableAdd /></TreeIcon>
        {item.name}
      </TreeRow>
    )
  }
  if (item.kind === 'table') {
    return (
      <TreeRow $hot $left={5}>
        <TreeLine $x={-13} $top={0} $bottom={0} />
        <TreeLine $x={12} $top={0} $bottom={15} />
        <Expander><Plus size={12} strokeWidth={3} /></Expander>
        <TreeIcon $gap={5}><TableLink /></TreeIcon>
        {item.name}
      </TreeRow>
    )
  }
  const last = index === databases.length - 1
  return (
    <TreeRow $left={12}>
      <TreeLine $x={20} $top={0} $bottom={last ? 15 : 0} />
      <TreeStub $x={29} $w={9} />
      <Expander>{item.open ? <Minus size={12} strokeWidth={3} /> : <Plus size={12} strokeWidth={3} />}</Expander>
      <TreeIcon $gap={6}><DbIcon /></TreeIcon>
      {item.name}
      {item.open && <TreeLine $x={45} $top={22} $bottom={0} />}
    </TreeRow>
  )
}

const LeftWindow = () => (
  <Win $strip="#182135">
    <Strip>
      <TabMenu $bg="#2a3244"><ChevronDown size={16} strokeWidth={3} /></TabMenu>
      <Tab $w={296} $ml={7}>
        <SheetIcon />
        <TabTitle>宮川大介様のカリキュラム - Google</TabTitle>
        <TabClose size={16} />
      </Tab>
      <Tab $w={290} $active>
        <PmaIcon />
        <TabTitle>localhost / 127.0.0.1 / lesson | ph</TabTitle>
        <TabClose size={16} />
      </Tab>
      <NewTab size={20} $ml={15} />
      <Controls />
    </Strip>
    <Toolbar>
      <NavButtons />
      <AddressBar>
        <SiteChip><Info size={18} /></SiteChip>
        <Url $ls={0.1}>localhost/phpmyadmin/index.php?route=/database/sql...</Url>
        <UrlIcons><Star size={20} /></UrlIcons>
      </AddressBar>
      <Extensions />
      <ToolSep />
      <Avatar />
      <Kebab><i /><i /><i /></Kebab>
    </Toolbar>
    <BookmarkBar />
    <Viewport>
      <Sidebar>
        <Logo><span>php</span>MyAdmin</Logo>
        <NavIcons>
          <Home /><Exit /><Help /><Docs /><Gear /><Reload />
        </NavIcons>
        <SideTabs>
          <SideTab>最近</SideTab>
          <SideTab>お気に入り</SideTab>
        </SideTabs>
        <TreeTools><Collapse /><LinkIcon /></TreeTools>
        <Tree>
          {databases.map((d, i) => <TreeItem key={i} item={d} index={i} />)}
        </Tree>
      </Sidebar>
      <Main>
        <Crumbs>
          <BackBox><ArrowLeft size={14} /></BackBox>
          <Crumb $gap={6}><ServerIcon />サーバ： 127.0.0.1</Crumb>
          <CrumbArrow>»</CrumbArrow>
          <Crumb $gap={0}><DbIcon />データベース: lesson</Crumb>
          <CrumbArrow>»</CrumbArrow>
          <Crumb $gap={6}><CalcIcon />テーブル: users “ユー</Crumb>
        </Crumbs>
        <MenuBar>
          <Burger><span /><span /><span /></Burger>
        </MenuBar>
        <Body>
          <QueryBtn>クエリボックスを表示</QueryBtn>
          <Success>SQL は正常に実行されました。</Success>
          <SqlBox>
            <Kw $dotted>SELECT</Kw> age,<Kw $dotted>COUNT</Kw><Kw $c="#777">(</Kw><Kw $c="#f0f">*</Kw><Kw $c="#777">)</Kw>{' '}
            <Kw>FROM</Kw> users <Kw>GROUP BY</Kw> age <Kw>HAVING</Kw> age <Kw $c="#f0f">=</Kw> <Kw $c="#a11">'59'</Kw>;
          </SqlBox>
          <ActionBar>
            <Check type="checkbox" readOnly />
            プロファイリング [ <a>インライン編集</a> ] [ <a>編集</a> ] [ <a>EXPLAIN で確認</a> ] [ <a>PHP コー</a><br />
            <a>ドの作成</a> ] [ <a>更新</a> ]
          </ActionBar>
          <OptionBtn>拡張オプション</OptionBtn>
          <ResultTable>
            <thead>
              <tr><th>age</th><th>COUNT(*)</th></tr>
            </thead>
            <tbody>
              <tr><td>59</td><td>3</td></tr>
            </tbody>
          </ResultTable>
          <Fieldset>
            <Legend>クエリ結果操作</Legend>
            <OpBtn $bare><Printer />印刷</OpBtn>
            <OpBtn><CopyIcon />クリップボードにコピー</OpBtn>
            <OpBtn><ExportIcon />エクスポート</OpBtn>
            <OpBtn><ChartIcon />グラフで表示する</OpBtn>
            <OpBtn><ViewIcon />ビューを作成する</OpBtn>
          </Fieldset>
          <Rule />
          <NoteIcon><NotePage /></NoteIcon>
        </Body>
        <ConsoleTab><ConsoleGlyph />コンソール</ConsoleTab>
      </Main>
    </Viewport>
  </Win>
)

const RightWindow = () => (
  <Win $strip="#232733">
    <Strip>
      <TabMenu $bg="#3a3e48"><ChevronDown size={16} strokeWidth={3} /></TabMenu>
      <Tab $w={152} $ml={6} $active>
        <Samurai />
        <TabTitle>取得したデー</TabTitle>
        <TabClose size={16} />
      </Tab>
      <Tab $w={160} $ml={6} $sep>
        <Samurai />
        <TabTitle>データベースと</TabTitle>
        <TabClose size={16} />
      </Tab>
      <Tab $w={158} $sep>
        <Samurai />
        <TabTitle>取得するデー</TabTitle>
        <TabClose size={16} />
      </Tab>
      <Tab $w={159} $sep>
        <Samurai />
        <TabTitle>関数を使って</TabTitle>
        <TabClose size={16} />
      </Tab>
      <NewTab size={20} $ml={9} />
      <Controls dim />
    </Strip>
    <Toolbar>
      <NavButtons />
      <AddressBar>
        <SiteChip><SlidersHorizontal size={18} /></SiteChip>
        <Url $ls={-0.35}>terakoya.sejuku.net/practices/01HTKZTMWES25S7...</Url>
        <UrlIcons><ZoomIn size={20} /><Star size={20} /></UrlIcons>
      </AddressBar>
      <Extensions />
      <ToolSep />
      <Avatar />
      <Kebab><i /><i /><i /></Kebab>
    </Toolbar>
    <BookmarkBar />
    <RightView>
      <Article>
        <Para>す。後述の各ステップごとにコマンドとその実行結果がわかるキャプチャを取り「images」ディレクト</Para>
        <Para>リに入れてください。キャプチャのファイル名についてはStep2のコマンドのキャプチャの場合は</Para>
        <Para>「step2-command」結果のキャプチャは「step2-result」、Step3の場合は「step3-command」「step3-</Para>
        <Para>result」のように名前を付けてください。</Para>
        <StepHead $mt={81.5}>Step2. データベースとテーブルを作成する</StepHead>
        <Para $mt={45.4}><a>7章 データベースとテーブルを作ろう</a> の手順通り進め、データベース「lesson」とダミーデータが入っ</Para>
        <Para>た「users」テーブルを用意してください。</Para>
        <Para>また今回はStep2に関してはキャプチャを取る必要はありません。</Para>
        <StepHead $mt={82.2}>Step3. GROUP BY句でデータを絞り込む</StepHead>
        <Para $mt={43.6}><Code>COUNT</Code>関数とGROUP BY句を使い年齢別のユーザー数を取得し、HAVING句を使い「年齢が59歳」のデ</Para>
        <Para>ータに絞り込んでみましょう。</Para>
        <PassHead>合格基準</PassHead>
        <Para $mt={43}>本課題の目標は、課題を通して以下の項目が身についているかどうか確認することです。</Para>
      </Article>
      <Scrollbar>
        ▲
        <Thumb />
        <ScrollEnd>▼</ScrollEnd>
      </Scrollbar>
      <AskBtn>+質問する</AskBtn>
    </RightView>
  </Win>
)

const apps = [
  { key: 'tv', icon: <TaskView /> },
  { key: 'wx', icon: <Weather />, badge: '1' },
  { key: 'ex', icon: <Explorer />, dot: true },
  { key: 'st', icon: <Store /> },
  { key: 'ch', icon: <Chrome />, dot: true, active: true },
  { key: 'se', icon: <Gear s={30} c="#8d97a6" h="#1a6fd0" /> },
  { key: 'vs', icon: <VsCode /> },
  { key: 'np', icon: <Notepad /> },
  { key: 'me', icon: <MeetIcon s={30} /> },
  { key: 'tb', icon: <TBook /> },
  { key: 'ec', icon: <Eclipse /> },
  { key: 'vb', icon: <VBox /> },
  { key: 'xa', icon: <Xampp />, dot: true },
]

const TaskbarView = () => (
  <Taskbar>
    <TaskIcon><WinLogo /></TaskIcon>
    <SearchPill><Search size={18} />検索</SearchPill>
    {apps.map(a => (
      <TaskIcon key={a.key} $dot={a.dot} $active={a.active}>
        {a.icon}
        {a.badge && <Badge>{a.badge}</Badge>}
      </TaskIcon>
    ))}
    <Tray>
      <TrayItem $w={60}><ChevronUp size={22} /></TrayItem>
      <TrayItem $w={22}><BluetoothPill /></TrayItem>
      <TrayItem $w={56}><TrayA>A</TrayA></TrayItem>
      <TrayItem $w={24}><TrayWifi /></TrayItem>
      <TrayItem $w={32}><TraySpeaker /></TrayItem>
      <TrayItem $w={32}><TrayBattery /></TrayItem>
      <Clock>11:41<br />2024/08/24</Clock>
      <TrayItem $w={36}><Bell size={20} /></TrayItem>
      <TrayItem $w={56}><Copilot /></TrayItem>
    </Tray>
  </Taskbar>
)

export default function App() {
  return (
    <Screen>
      <Global />
      <Desktop>
        <LeftWindow />
        <RightWindow />
      </Desktop>
      <TaskbarView />
    </Screen>
  )
}
